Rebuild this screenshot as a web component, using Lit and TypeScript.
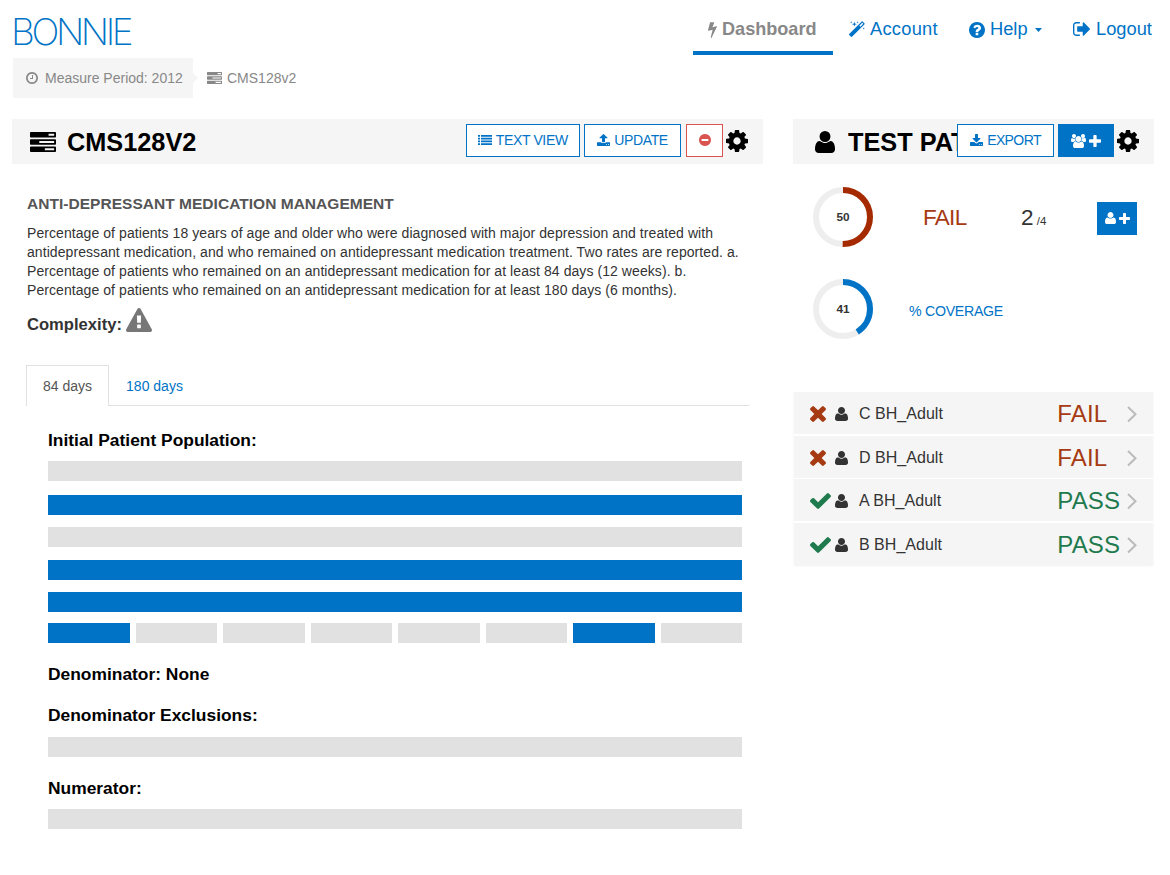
import { LitElement, html, css, svg } from "lit";
import { customElement } from "lit/decorators.js";
import { classMap } from "lit/directives/class-map.js";

type Glyph = { box: string; d: string };

const GLYPHS: Record<string, Glyph> = {
  bolt: { box: "449 0 895 1792", d: "M1333 566q18 20 7 44l-540 1157q-13 25-42 25-4 0-14-2-17-5-25.5-19t-4.5-30l197-808-406 101q-4 1-12 1-18 0-31-11-18-15-13-39l201-825q4-14 16-23t28-9h328q19 0 32 12.5t13 29.5q0 8-5 18l-171 463 396-98q8-2 12-2 19 0 34 15z" },
  clock: { box: "128 128 1536 1536", d: "M1024 544v448q0 14-9 23t-23 9h-320q-14 0-23-9t-9-23v-64q0-14 9-23t23-9h224v-352q0-14 9-23t23-9h64q14 0 23 9t9 23zm416 352q0-148-73-273t-198-198-273-73-273 73-198 198-73 273 73 273 198 198 273 73 273-73 198-198 73-273zm224 0q0 209-103 385.5t-279.5 279.5-385.5 103-385.5-103-279.5-279.5-103-385.5 103-385.5 279.5-279.5 385.5-103 385.5 103 279.5 279.5 103 385.5z" },
  question: { box: "128 128 1536 1536", d: "M1024 1376v-192q0-14-9-23t-23-9h-192q-14 0-23 9t-9 23v192q0 14 9 23t23 9h192q14 0 23-9t9-23zm256-672q0-88-55.5-163t-138.5-116-170-41q-243 0-371 213-15 24 8 42l132 100q7 6 19 6 16 0 25-12 53-68 86-92 34-24 86-24 48 0 85.5 26t37.5 59q0 38-20 61t-68 45q-63 28-115.5 86.5t-52.5 125.5v36q0 14 9 23t23 9h192q14 0 23-9t9-23q0-19 21.5-49.5t54.5-49.5q32-18 49-28.5t46-35 44.5-48 28-60.5 12.5-81zm384 192q0 209-103 385.5t-279.5 279.5-385.5 103-385.5-103-279.5-279.5-103-385.5 103-385.5 279.5-279.5 385.5-103 385.5 103 279.5 279.5 103 385.5z" },
  signout: { box: "64 256 1568 1280", d: "M704 1440q0 4 1 20t.5 26.5-3 23.5-10 19.5-20.5 6.5h-320q-119 0-203.5-84.5t-84.5-203.5v-704q0-119 84.5-203.5t203.5-84.5h320q13 0 22.5 9.5t9.5 22.5q0 4 1 20t.5 26.5-3 23.5-10 19.5-20.5 6.5h-320q-66 0-113 47t-47 113v704q0 66 47 113t113 47h312l11.5 1 11.5 3 8 5.5 7 9 2 13.5zm928-544q0 26-19 45l-544 544q-19 19-45 19t-45-19-19-45v-288h-448q-26 0-45-19t-19-45v-384q0-26 19-45t45-19h448v-288q0-26 19-45t45-19 45 19l544 544q19 19 19 45z" },
  magic: { box: "91 0 1637 1637", d: "M1254 581l293-293-107-107-293 293zm447-293q0 27-18 45l-1286 1286q-18 18-45 18t-45-18l-198-198q-18-18-18-45t18-45l1286-1286q18-18 45-18t45 18l198 198q18 18 18 45zm-1351-190l98 30-98 30-30 98-30-98-98-30 98-30 30-98zm350 162l196 60-196 60-60 196-60-196-196-60 196-60 60-196zm930 478l98 30-98 30-30 98-30-98-98-30 98-30 30-98zm-640-640l98 30-98 30-30 98-30-98-98-30 98-30 30-98z" },
  tasks: { box: "0 128 1792 1408", d: "M1024 1408h640v-128h-640v128zm-384-512h1024v-128h-1024v128zm640-512h384v-128h-384v128zm512 832v256q0 26-19 45t-45 19h-1664q-26 0-45-19t-19-45v-256q0-26 19-45t45-19h1664q26 0 45 19t19 45zm0-512v256q0 26-19 45t-45 19h-1664q-26 0-45-19t-19-45v-256q0-26 19-45t45-19h1664q26 0 45 19t19 45zm0-512v256q0 26-19 45t-45 19h-1664q-26 0-45-19t-19-45v-256q0-26 19-45t45-19h1664q26 0 45 19t19 45z" },
  list: { box: "0 0 1792 1408", d: "M0 0h256v256H0zM384 0h1408v256H384zM0 384h256v256H0zM384 384h1408v256H384zM0 768h256v256H0zM384 768h1408v256H384zM0 1152h256v256H0zM384 1152h1408v256H384z" },
  upload: { box: "64 64 1664 1600", d: "M1344 1472q0-26-19-45t-45-19-45 19-19 45 19 45 45 19 45-19 19-45zm256 0q0-26-19-45t-45-19-45 19-19 45 19 45 45 19 45-19 19-45zm128-224v320q0 40-28 68t-68 28h-1472q-40 0-68-28t-28-68v-320q0-40 28-68t68-28h427q21 56 70.5 92t110.5 36h256q61 0 110.5-36t70.5-92h427q40 0 68 28t28 68zm-325-648q-17 40-59 40h-256v448q0 26-19 45t-45 19h-256q-26 0-45-19t-19-45v-448h-256q-42 0-59-40-17-39 14-69l448-448q18-19 45-19t45 19l448 448q31 30 14 69z" },
  download: { box: "64 0 1664 1536", d: "M1344 1344q0-26-19-45t-45-19-45 19-19 45 19 45 45 19 45-19 19-45zm256 0q0-26-19-45t-45-19-45 19-19 45 19 45 45 19 45-19 19-45zm128-224v320q0 40-28 68t-68 28h-1472q-40 0-68-28t-28-68v-320q0-40 28-68t68-28h465l135 136q58 56 136 56t136-56l136-136h464q40 0 68 28t28 68zm-325-569q17 41-14 70l-448 448q-18 19-45 19t-45-19l-448-448q-31-29-14-70 17-39 59-39h256v-448q0-26 19-45t45-19h256q26 0 45 19t19 45v448h256q42 0 59 39z" },
  minus: { box: "128 128 1536 1536", d: "M1344 960v-128q0-26-19-45t-45-19h-768q-26 0-45 19t-19 45v128q0 26 19 45t45 19h768q26 0 45-19t19-45zm320-64q0 209-103 385.5t-279.5 279.5-385.5 103-385.5-103-279.5-279.5-103-385.5 103-385.5 279.5-279.5 385.5-103 385.5 103 279.5 279.5 103 385.5z" },
  cog: { box: "128 128 1536 1536", d: "M1152 896q0-106-75-181t-181-75-181 75-75 181 75 181 181 75 181-75 75-181zm512-109v222q0 12-8 23t-20 13l-185 28q-19 54-39 91 35 50 107 138 10 12 10 25t-9 23q-27 37-99 108t-94 71q-12 0-26-9l-138-108q-44 23-91 38-16 136-29 186-7 28-36 28h-222q-14 0-24.5-8.5t-11.5-21.5l-28-184q-49-16-90-37l-141 107q-10 9-25 9-14 0-25-11-126-114-165-168-7-10-7-23 0-12 8-23 15-21 51-66.5t54-70.5q-27-50-41-99l-183-27q-13-2-21-12.5t-8-23.5v-222q0-12 8-23t19-13l186-28q14-46 39-92-40-57-107-138-10-12-10-24 0-10 9-23 26-36 98.5-107.5t94.5-71.5q13 0 26 10l138 107q44-23 91-38 16-136 29-186 7-28 36-28h222q14 0 24.5 8.5t11.5 21.5l28 184q49 16 90 37l142-107q9-9 24-9 13 0 25 10 129 119 165 170 7 8 7 22 0 12-8 23-15 21-51 66.5t-54 70.5q26 50 41 98l183 28q13 2 21 12.5t8 23.5z" },
  user: { box: "192 128 1408 1536", d: "M1600 1405q0 120-73 189.5t-194 69.5h-874q-121 0-194-69.5t-73-189.5q0-53 3.5-103.5t14-109 26.5-108.5 43-97.5 62-81 85.5-53.5 111.5-20q9 0 42 21.5t74.5 48 108 48 133.5 21.5 133.5-21.5 108-48 74.5-48 42-21.5q61 0 111.5 20t85.5 53.5 62 81 43 97.5 26.5 108.5 14 109 3.5 103.5zm-320-893q0 159-112.5 271.5t-271.5 112.5-271.5-112.5-112.5-271.5 112.5-271.5 271.5-112.5 271.5 112.5 112.5 271.5z" },
  users: { box: "64 0 1920 1792", d: "M657 896q-162 5-265 128h-134q-82 0-138-40.5t-56-118.5q0-353 124-353 6 0 43.5 21t97.5 42.5 119 21.5q67 0 133-23-5 37-5 66 0 159 81 295zm1071 637q0 120-73 189.5t-194 69.5h-874q-121 0-194-69.5t-73-189.5q0-53 3.5-103.5t14-109 26.5-108.5 43-97.5 62-81 85.5-53.5 111.5-20q10 0 43 21.5t73 48 107 48 135 21.5 135-21.5 107-48 73-48 43-21.5q61 0 111.5 20t85.5 53.5 62 81 43 97.5 26.5 108.5 14 109 3.5 103.5zm-1024-1277q0 106-75 181t-181 75-181-75-75-181 75-181 181-75 181 75 75 181zm704 384q0 159-112.5 271.5t-271.5 112.5-271.5-112.5-112.5-271.5 112.5-271.5 271.5-112.5 271.5 112.5 112.5 271.5zm576 225q0 78-56 118.5t-138 40.5h-134q-103-123-265-128 81-136 81-295 0-29-5-66 66 23 133 23 59 0 119-21.5t97.5-42.5 43.5-21q124 0 124 353zm-128-609q0 106-75 181t-181 75-181-75-75-181 75-181 181-75 181 75 75 181z" },
  plus: { box: "192 128 1408 1408", d: "M1600 736v192q0 40-28 68t-68 28h-416v416q0 40-28 68t-68 28h-192q-40 0-68-28t-28-68v-416h-416q-40 0-68-28t-28-68v-192q0-40 28-68t68-28h416v-416q0-40 28-68t68-28h192q40 0 68 28t28 68v416h416q40 0 68 28t28 68z" },
  times: { box: "302 366 1188 1188", d: "M1490 1322q0 40-28 68l-136 136q-28 28-68 28t-68-28l-294-294-294 294q-28 28-68 28t-68-28l-136-136q-28-28-28-68t28-68l294-294-294-294q-28-28-28-68t28-68l136-136q28-28 68-28t68 28l294 294 294-294q28-28 68-28t68 28l136 136q28 28 28 68t-28 68l-294 294 294 294q28 28 28 68z" },
  check: { box: "121 334 1550 1188", d: "M1671 566q0 40-28 68l-724 724-136 136q-28 28-68 28t-68-28l-136-136-362-362q-28-28-28-68t28-68l136-136q28-28 68-28t68 28l294 295 656-657q28-28 68-28t68 28l136 136q28 28 28 68z" },
  warning: { box: "0 0 1792 1664", d: "M1024 1375v-190q0-14-9.5-23.5t-22.5-9.5h-192q-13 0-22.5 9.5t-9.5 23.5v190q0 14 9.5 23.5t22.5 9.5h192q13 0 22.5-9.5t9.5-23.5zm-2-374l18-459q0-12-10-19-13-11-24-11h-220q-11 0-24 11-10 7-10 21l17 457q0 10 10 16.5t24 6.5h185q14 0 23.5-6.5t10.5-16.5zm-14-934l768 1408q35 63-2 126-17 29-46.5 46t-63.5 17h-1536q-34 0-63.5-17t-46.5-46q-37-63-2-126l768-1408q17-31 47-49t65-18 65 18 47 49z" },
  caret: { box: "0 0 8 4", d: "M0 0h8L4 4z" },
};

const icon = (name: string, w: number, h: number) => html`<svg
  class="i" width=${w} height=${h} viewBox=${GLYPHS[name].box}
  preserveAspectRatio="none" aria-hidden="true"
>${svg`<path fill="currentColor" d=${GLYPHS[name].d}></path>`}</svg>`;

const ring = (pct: number, cls: string) => {
  const c = 2 * Math.PI * 27;
  return html`<div class="ring">
    <svg class="i" width="60" height="60" viewBox="0 0 60 60">
      <circle class="track" cx="30" cy="30" r="27"></circle>
      <circle class="arc ${cls}" cx="30" cy="30" r="27" transform="rotate(-90 30 30)"
        stroke-dasharray="${(c * pct) / 100} ${c}"></circle>
    </svg>
    <span class="ring-num">${pct}</span>
  </div>`;
};

const PATIENTS = [
  { name: "C BH_Adult", pass: false },
  { name: "D BH_Adult", pass: false },
  { name: "A BH_Adult", pass: true },
  { name: "B BH_Adult", pass: true },
];
const CELLS = [true, false, false, false, false, false, true, false];

@customElement("app-root")
export class AppRoot extends LitElement {
  static styles = css`
    :host { display: block; width: 1170px; height: 875px; overflow: hidden; background: #fff;
      font-family: "Liberation Sans", Arial, sans-serif; color: #333; white-space: nowrap; }
    * { box-sizing: border-box; }
    .i { display: block; flex: none; }
    h1, h2, h3, p, ul, ol { margin: 0; padding: 0; list-style: none; }
    .top { display: flex; justify-content: space-between; height: 58px; padding: 0 16px 0 11px; }
    .brand { font: 200 37px/37px "Inter", "Lato", sans-serif; color: #0073c6; padding-top: 13px; letter-spacing: -3.4px; }
    .nav { display: flex; height: 55px; font-size: 18.3px; line-height: 22px; color: #0073c6; }
    .nav li { display: flex; align-items: flex-start; padding-top: 18px; }
    .nav .active { width: 140px; padding-left: 15px; color: #888; font-weight: bold; font-size: 18.1px; border-bottom: 4px solid #0073c6; }
    .bolt { padding: 3px 5px 0 0; }
    .account { padding-left: 16px; width: 120px; letter-spacing: .25px; }
    .account .i { margin: 3px 5px 0 0; }
    .help { padding-left: 16px; width: 104px; }
    .help .i { margin: 4px 5px 0 0; }
    .help .caret { margin: 3px 0 0 7px; }
    .help .caret .i { margin-top: 7px; }
    .logout { padding-left: 16px; width: 97px; }
    .logout .i { margin: 4px 6px 0 0; }

    .crumbs { display: flex; align-items: center; height: 40px; padding-left: 13px; font-size: 14px; color: #888; }
    .crumb { display: flex; align-items: center; height: 40px; }
    .crumb.first { width: 180px; background: #f5f5f5; padding-left: 13px; }
    .crumb.first .i { margin-right: 7px; }
    .arrow { border: 5px solid transparent; border-left: 5px solid #f5f5f5; border-right: 0; margin-right: 9px; }
    .crumb.second .i { margin-right: 5px; }

    .cols { display: flex; gap: 30px; padding: 21px 16px 0 12px; align-items: flex-start; }
    .measure { width: 751px; }
    .side { width: 361px; }
    .bar-head { display: flex; height: 45px; background: #f5f5f5; color: #000; padding: 5px 14px 0 18px; }
    .bar-head h1 { font-size: 25.3px; line-height: 29px; font-weight: bold; padding-top: 4px; flex: 1; min-width: 0; overflow: hidden; }
    .head-icon { width: 37px; padding-top: 8px; }
    .side .bar-head { padding-left: 22px; }
    .side .head-icon { width: 33px; padding-top: 7px; }
    .btn { display: flex; align-items: center; justify-content: center; height: 33px; border: 1px solid #0073c6; background: #fff; color: #0073c6; font-size: 14px; letter-spacing: -.35px; padding-bottom: 2px; }
    .btn .i { margin-right: 4px; }
    .btn.text { width: 114.5px; margin-right: 4px; }
    .btn.update { width: 97px; margin-right: 5px; }
    .btn.remove { width: 37px; border-color: #d9534f; color: #d9534f; margin-right: 4px; }
    .btn.remove .i { margin: 0; }
    .btn.export { width: 97px; margin-right: 4px; font-size: 14px; letter-spacing: -.6px; }
    .btn.solid { background: #0073c6; color: #fff; padding: 0; }
    .btn.solid .i { margin: 0; }
    .btn.solid .i + .i { margin-left: 3px; }
    .btn.group { width: 56px; margin-right: 4px; }
    .btn.add { width: 40px; margin-top: 2px; }
    .cog { padding-top: 6px; margin: 0 1px 0 -1px; }

    .desc { padding: 30px 15px 0; }
    .desc h2 { font-size: 15.5px; line-height: 20px; color: #555; letter-spacing: .03px; }
    .desc p { font-size: 14px; letter-spacing: .07px; line-height: 19.1px; padding-top: 10px; height: 97px; }
    .complexity { display: flex; height: 24px; font-size: 16.6px; font-weight: bold; line-height: 20px; padding-top: 4px; }
    .complexity .i { margin: -7px 0 0 4px; color: #777; }
    .tabs { display: flex; margin: 30px 14px 0; height: 41px; border-bottom: 1px solid #e1e1e1; font-size: 14px; }
    .tab { display: flex; align-items: center; justify-content: center; height: 41px; color: #0073c6; width: 91px; }
    .tab.on { width: 83px; background: #fff; color: #555; border: 1px solid #e1e1e1; border-bottom: 0; }

    .logic { padding: 24px 21px 0 36px; color: #000; }
    .logic h3 { font-size: 17.4px; line-height: 20px; font-weight: bold; }
    .strip { height: 20px; background: #e1e1e1; }
    .strip.on { background: #0073c6; }
    .g11 { margin-top: 11px; } .g12 { margin-top: 12px; } .g13 { margin-top: 13px; } .g14 { margin-top: 14px; }
    .cells { display: grid; grid-template-columns: repeat(8, 1fr); gap: 6px; }
    .den, .exc, .num { padding-top: 21px; }

    .stats { height: 228px; padding: 23px 17px 0 20px; }
    .stat { display: flex; align-items: center; height: 60px; }
    .stat + .stat { margin-top: 32px; }
    .ring { display: grid; place-items: center; width: 60px; height: 60px; }
    .ring > * { grid-area: 1 / 1; }
    .ring-num { font-size: 11.8px; font-weight: bold; }
    .track, .arc { fill: none; stroke: #eee; stroke-width: 6; }
    .arc.bad { stroke: #a52a00; }
    .arc.cov { stroke: #0073c6; }
    .result { width: 98px; margin-left: 50px; padding-top: 1px; font-size: 22.5px; letter-spacing: -.7px; color: #a63a12; }
    .count { width: 76px; padding-top: 2px; font-size: 22.5px; word-spacing: -3px; }
    .count small { font-size: 11.5px; }
    .coverage { margin: 4px 0 0 36px; font-size: 14.2px; letter-spacing: -.3px; color: #0073c6; }

    .rows { display: flex; flex-direction: column; gap: 1.6px; margin: 0 1px; box-shadow: 0 1px 2px rgba(0,0,0,.06); }
    .row { display: flex; align-items: center; height: 42.1px; background: #f5f5f5; padding: 2px 16px 0; font-size: 16px; letter-spacing: .05px; }
    .mark { width: 25px; color: #a63a12; }
    .row.pass .mark, .row.pass .verdict { color: #1f7a4d; }
    .name { width: 199.5px; margin-left: 11px; }
    .verdict { width: 70px; font-size: 24px; letter-spacing: .1px; color: #a63a12; }
    .chev { fill: none; stroke: #bbb; stroke-width: 2; }
  `;

  render() {
    return html`
      <header class="top">
        <div class="brand">BONNIE</div>
        <ul class="nav">
          <li class="active"><span class="bolt">${icon("bolt", 9, 17)}</span>Dashboard</li>
          <li class="account">${icon("magic", 16, 16)}Account</li>
          <li class="help">${icon("question", 16, 16)}Help<span class="caret">${icon("caret", 7, 4)}</span></li>
          <li class="logout">${icon("signout", 17, 14)}Logout</li>
        </ul>
      </header>
      <nav class="crumbs">
        <div class="crumb first">${icon("clock", 12, 12)}Measure Period: 2012</div>
        <i class="arrow"></i>
        <div class="crumb second">${icon("tasks", 15, 12)}CMS128v2</div>
      </nav>
      <main class="cols">
        <section class="measure">
          <div class="bar-head">
            <span class="head-icon">${icon("tasks", 26, 20)}</span>
            <h1>CMS128V2</h1>
            <div class="btn text">${icon("list", 14, 10)}TEXT VIEW</div>
            <div class="btn update">${icon("upload", 13, 12)}UPDATE</div>
            <div class="btn remove">${icon("minus", 12, 12)}</div>
            <span class="cog">${icon("cog", 22, 22)}</span>
          </div>
          <div class="desc">
            <h2>ANTI-DEPRESSANT MEDICATION MANAGEMENT</h2>
            <p>Percentage of patients 18 years of age and older who were diagnosed with major depression and treated with<br />antidepressant medication, and who remained on antidepressant medication treatment. Two rates are reported. a.<br />Percentage of patients who remained on an antidepressant medication for at least 84 days (12 weeks). b.<br />Percentage of patients who remained on an antidepressant medication for at least 180 days (6 months).</p>
            <div class="complexity">Complexity:${icon("warning", 26, 24)}</div>
          </div>
          <div class="tabs">
            <div class="tab on">84 days</div>
            <div class="tab">180 days</div>
          </div>
          <div class="logic">
            <h3>Initial Patient Population:</h3>
            <div class="strip g11"></div>
            <div class="strip on g14"></div>
            <div class="strip g12"></div>
            <div class="strip on g13"></div>
            <div class="strip on g12"></div>
            <div class="cells g11">
              ${CELLS.map((on) => html`<div class=${classMap({ strip: true, on })}></div>`)}
            </div>
            <h3 class="den">Denominator: None</h3>
            <h3 class="exc">Denominator Exclusions:</h3>
            <div class="strip g12"></div>
            <h3 class="num">Numerator:</h3>
            <div class="strip g11"></div>
          </div>
        </section>
        <aside class="side">
          <div class="bar-head">
            <span class="head-icon">${icon("user", 20, 22)}</span>
            <h1>TEST PATIENTS</h1>
            <div class="btn export">${icon("download", 13, 12)}EXPORT</div>
            <div class="btn solid group">${icon("users", 15, 14)}${icon("plus", 12, 12)}</div>
            <span class="cog">${icon("cog", 22, 22)}</span>
          </div>
          <div class="stats">
            <div class="stat">
              ${ring(50, "bad")}
              <span class="result">FAIL</span>
              <span class="count">2 <small>/4</small></span>
              <div class="btn solid add">${icon("user", 11, 12)}${icon("plus", 11, 11)}</div>
            </div>
            <div class="stat">
              ${ring(41, "cov")}
              <span class="coverage">% COVERAGE</span>
            </div>
          </div>
          <div class="rows">
            ${PATIENTS.map((p) => html`<div class=${classMap({ row: true, pass: p.pass })}>
              <span class="mark">${p.pass ? icon("check", 21, 16) : icon("times", 16, 16)}</span>
              ${icon("user", 13, 14)}
              <span class="name">${p.name}</span>
              <span class="verdict">${p.pass ? "PASS" : "FAIL"}</span>
              <svg class="i" width="10" height="18" viewBox="0 0 10 18"><path class="chev" d="M1 2l7.5 7.2L1 16.5"></path></svg>
            </div>`)}
          </div>
        </aside>
      </main>
    `;
  }
}
